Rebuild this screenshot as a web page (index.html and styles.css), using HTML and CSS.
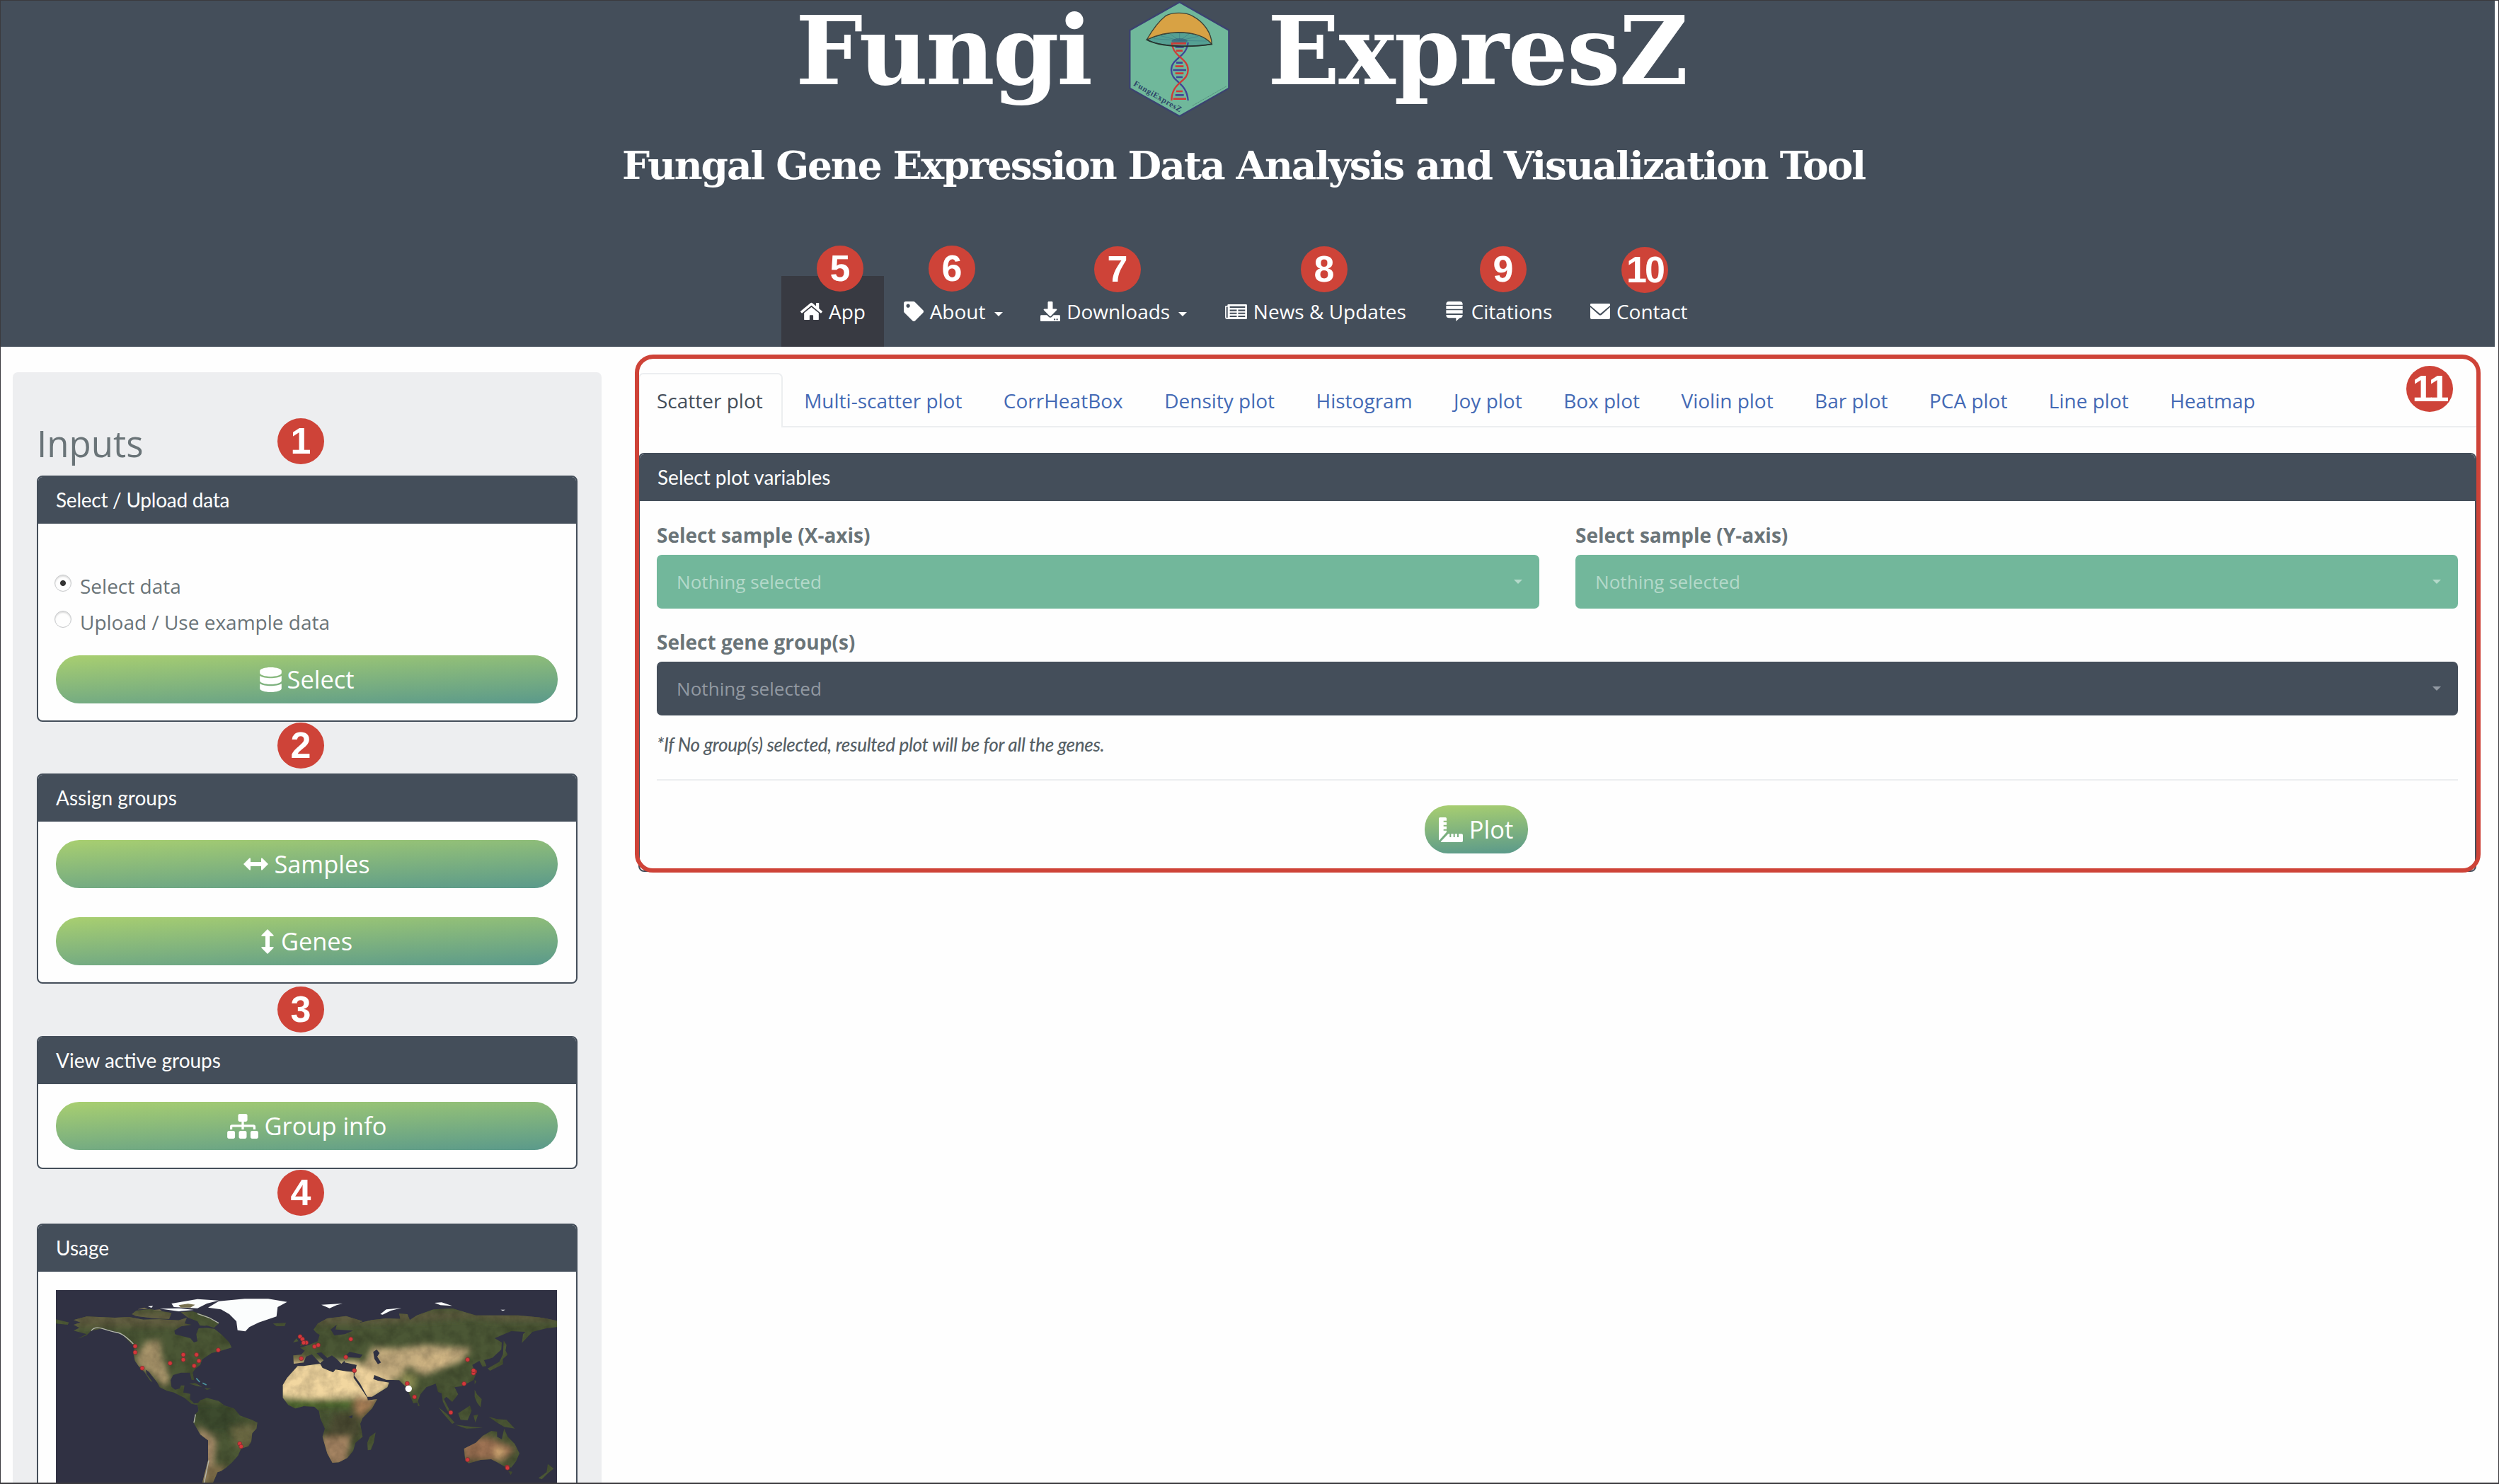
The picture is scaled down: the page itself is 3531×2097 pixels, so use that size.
FILE: index.html
```html
<!DOCTYPE html>
<html lang="en">
<head>
<meta charset="utf-8">
<title>FungiExpresZ</title>
<link rel="stylesheet" href="styles.css">
</head>
<body>
<header class="header">
  <div class="brand">
    <span class="brand-left">Fungi</span>
    <svg class="logo" viewBox="0 0 540 510">
      <path d="M260 9 469 128V374L260 493 49 374V128Z" fill="#70b89b" stroke="#3b4270" stroke-width="7"/>
      <path d="M121 168C180 200 320 200 397 187C370 150 310 138 255 138C200 138 150 155 121 168Z" fill="#55a093" stroke="#33473f" stroke-width="4"/>
      <path d="M260 172 150 164M260 172 180 152M260 172 220 144M260 172 260 140M260 172 300 144M260 172 340 154M260 172 375 174" stroke="#3f7f86" stroke-width="2"/>
      <ellipse cx="260" cy="174" rx="34" ry="12" fill="#345c7c" opacity=".6"/>
      <path d="M121 168C140 135 165 95 200 68C225 52 285 50 315 68C365 95 395 140 397 187C365 150 310 137 255 137C200 137 150 155 121 168Z" fill="#d8a244" stroke="#3c4237" stroke-width="4"/>
      <path d="M232 184h56M246 215h27M242 281h35M242 311h35M246 387h27M233 419h55" stroke="#cf3b36" stroke-width="8"/>
      <path d="M242 199h36M246 266h27M232 297h56M246 327h27M242 403h36" stroke="#3f4597" stroke-width="8"/>
      <path d="M296 180C290 245 225 245 225 297C225 350 290 345 296 426" fill="none" stroke="#3f4597" stroke-width="7"/>
      <path d="M227 180C233 245 296 245 296 297C296 350 227 345 226 426" fill="none" stroke="#cf3b36" stroke-width="7"/>
      <path d="M121 168C180 203 320 200 397 187" fill="none" stroke="#26332f" stroke-width="5"/>
      <text class="logo-text" transform="translate(63 361) rotate(30)" textLength="229">FungiExpresZ</text>
      <path d="M315 448 460 365" stroke="#57907f" stroke-width="3" stroke-dasharray="9 3"/>
    </svg>
    <span class="brand-right">ExpresZ</span>
  </div>
  <div class="subtitle">Fungal Gene Expression Data Analysis and Visualization Tool</div>
  <nav class="nav">
    <a class="nav-item active"><svg class="i-home" viewBox="0 0 576 512"><path d="M280.37 148.26L96 300.11V464a16 16 0 0 0 16 16l112.06-.29a16 16 0 0 0 15.92-16V368a16 16 0 0 1 16-16h64a16 16 0 0 1 16 16v95.64a16 16 0 0 0 16 16.05L464 480a16 16 0 0 0 16-16V300L295.67 148.26a12.19 12.19 0 0 0-15.3 0zM571.6 251.47L488 182.56V44.05a12 12 0 0 0-12-12h-56a12 12 0 0 0-12 12v72.61L318.47 43a48 48 0 0 0-61 0L4.34 251.47a12 12 0 0 0-1.6 16.9l25.5 31A12 12 0 0 0 45.15 301l235.22-193.74a12.19 12.19 0 0 1 15.3 0L530.9 301a12 12 0 0 0 16.9-1.6l25.5-31a12 12 0 0 0-1.7-16.93z"/></svg><span>App</span></a>
    <a class="nav-item"><svg class="i-28" viewBox="0 0 512 512"><path d="M0 252.118V48C0 21.49 21.49 0 48 0h204.118a48 48 0 0 1 33.941 14.059l211.882 211.882c18.745 18.745 18.745 49.137 0 67.882L293.823 497.941c-18.745 18.745-49.137 18.745-67.882 0L14.059 286.059A48 48 0 0 1 0 252.118zM112 64c-26.51 0-48 21.49-48 48s21.49 48 48 48 48-21.49 48-48-21.49-48-48-48z"/></svg><span>About</span><i class="caret"></i></a>
    <a class="nav-item"><svg class="i-28" viewBox="0 0 512 512"><path d="M216 0h80c13.3 0 24 10.7 24 24v168h87.7c17.8 0 26.7 21.5 14.1 34.1L269.7 378.3c-7.5 7.5-19.8 7.5-27.3 0L90.1 226.1c-12.6-12.6-3.7-34.1 14.1-34.1H192V24c0-13.3 10.7-24 24-24zm296 376v112c0 13.3-10.7 24-24 24H24c-13.3 0-24-10.7-24-24V376c0-13.3 10.7-24 24-24h146.7l49 49c20.1 20.1 52.5 20.1 72.6 0l49-49H488c13.3 0 24 10.7 24 24zm-124 88c0-11-9-20-20-20s-20 9-20 20 9 20 20 20 20-9 20-20zm64 0c0-11-9-20-20-20s-20 9-20 20 9 20 20 20 20-9 20-20z"/></svg><span>Downloads</span><i class="caret"></i></a>
    <a class="nav-item"><svg class="i-news" viewBox="0 0 94 64"><path fill-rule="evenodd" d="M14 0H90Q94 0 94 4V60Q94 64 90 64H9Q0 64 0 55V10Q0 6 4 6H10V4Q10 0 14 0ZM5 11V54Q5 59 9 59Q11 59 11 55V11ZM20 8V15H86V8ZM20 23V30H50V23ZM56 23V30H86V23ZM20 36V42H50V36ZM56 36V42H86V36ZM20 49V55H50V49ZM56 49V55H86V49Z"/></svg><span>News &amp; Updates</span></a>
    <a class="nav-item"><svg class="i-cite" viewBox="0 0 70 84"><path d="M12 0H58Q70 0 70 12V14H0V12Q0 0 12 0ZM0 18H70V32H0ZM0 37H70V51H0ZM0 57H70Q70 70 58 70L42 84V70H12Q0 70 0 57Z"/></svg><span>Citations</span></a>
    <a class="nav-item"><svg class="i-mail" viewBox="0 0 84 66"><path d="M4 0H80Q84 0 84 4V8L44 42Q42 44 40 42L0 8V4Q0 0 4 0ZM0 15 36 47Q42 52 48 47L84 15V60Q84 66 78 66H6Q0 66 0 60Z"/></svg><span>Contact</span></a>
  </nav>
</header>

<div class="content">
  <aside class="sidebar">
    <h2 class="inputs">Inputs</h2>
    <section class="card card-data">
      <div class="card-head">Select / Upload data</div>
      <div class="card-body">
        <label class="radio"><i class="dot on"></i>Select data</label>
        <label class="radio"><i class="dot"></i>Upload / Use example data</label>
        <button class="btn"><svg class="i-db" viewBox="0 0 448 512"><path d="M448 73.143v45.714C448 159.143 347.667 192 224 192S0 159.143 0 118.857V73.143C0 32.857 100.333 0 224 0s224 32.857 224 73.143zM448 176v102.857C448 319.143 347.667 352 224 352S0 319.143 0 278.857V176c48.125 33.143 136.208 48.572 224 48.572S399.874 209.143 448 176zm0 160v102.857C448 479.143 347.667 512 224 512S0 479.143 0 438.857V336c48.125 33.143 136.208 48.572 224 48.572S399.874 369.143 448 336z"/></svg>Select</button>
      </div>
    </section>
    <section class="card card-assign">
      <div class="card-head">Assign groups</div>
      <div class="card-body">
        <button class="btn"><svg class="i-h" viewBox="0 0 35 18"><path d="M0 9 8 1Q10-1 10 2V6H25V2Q25-1 27 1L35 9 27 17Q25 19 25 16V12H10V16Q10 19 8 17Z"/></svg>Samples</button>
        <button class="btn"><svg class="i-v" viewBox="0 0 18 35"><path d="M9 0 1 8Q-1 10 2 10H6V25H2Q-1 25 1 27L9 35 17 27Q19 25 16 25H12V10H16Q19 10 17 8Z"/></svg>Genes</button>
      </div>
    </section>
    <section class="card card-view">
      <div class="card-head">View active groups</div>
      <div class="card-body">
        <button class="btn"><svg class="i-site" viewBox="0 0 640 512"><path d="M128 352H32c-17.67 0-32 14.33-32 32v96c0 17.67 14.33 32 32 32h96c17.67 0 32-14.33 32-32v-96c0-17.67-14.33-32-32-32zm-24-80h192v48h48v-48h192v48h48v-57.59c0-21.17-17.23-38.41-38.41-38.41H344v-64h40c17.67 0 32-14.33 32-32V32c0-17.67-14.33-32-32-32H256c-17.67 0-32 14.33-32 32v96c0 17.67 14.33 32 32 32h40v64H94.41C73.23 224 56 241.23 56 262.41V320h48v-48zm264 80h-96c-17.67 0-32 14.33-32 32v96c0 17.67 14.33 32 32 32h96c17.67 0 32-14.33 32-32v-96c0-17.67-14.33-32-32-32zm240 0h-96c-17.67 0-32 14.33-32 32v96c0 17.67 14.33 32 32 32h96c17.67 0 32-14.33 32-32v-96c0-17.67-14.33-32-32-32z"/></svg>Group info</button>
      </div>
    </section>
    <section class="card card-usage">
      <div class="card-head">Usage</div>
      <div class="card-body">
        <svg class="map" viewBox="0 18 2124 819" preserveAspectRatio="none">
          <defs>
            <filter id="soft" x="-50%" y="-50%" width="200%" height="200%"><feGaussianBlur stdDeviation="12"/></filter>
            <filter id="grain" x="0" y="0" width="100%" height="100%"><feTurbulence type="fractalNoise" baseFrequency=".02" numOctaves="4" seed="4"/><feColorMatrix values="0 0 0 0 0  0 0 0 0 0  0 0 0 0 0  1.6 0 0 0 -.55"/></filter>
            <clipPath id="land">
              <path id="na" d="M75 145 130 130 250 135 310 132 370 143 440 142 520 146 555 135 545 160 575 165 530 172 502 190 505 205 535 213 570 222 585 240 600 235 595 205 605 180 640 178 672 182 700 205 720 225 735 240 745 262 700 275 660 285 620 312 612 335 590 352 580 368 586 400 575 398 568 368 530 368 497 378 486 400 490 428 505 440 525 435 530 422 545 422 540 452 570 458 568 480 585 498 605 497 600 505 575 500 545 475 500 452 470 445 440 430 430 410 395 365 380 355 385 375 410 408 400 403 375 365 350 340 335 318 328 285 335 255 318 245 280 205 240 190 190 182 150 190 130 210 90 225 130 205 75 190 100 178 75 165 105 155Z"/>
              <path d="M322 120 340 105 400 98 450 108 490 115 480 140 420 138 340 128ZM530 112 580 108 640 128 690 160 670 178 630 165 600 150 560 135ZM600 150 640 170 610 168ZM0 142 55 155 50 165 0 160ZM920 160 975 157 970 170 935 171ZM565 415 590 412 620 428 600 425ZM628 433 658 436 640 441Z"/>
              <path id="sa" d="M600 500 612 485 640 475 690 488 715 508 755 520 780 550 830 568 854 580 850 605 832 625 828 660 815 680 785 690 772 720 745 750 722 770 700 785 685 790 665 836H620L632 790 645 740 645 655 612 630 583 580 590 545 605 530Z"/>
              <path id="af" d="M1025 340 1050 340 1120 330 1130 348 1175 367 1185 355 1230 362 1262 365 1262 390 1290 430 1320 475 1322 485 1362 480 1340 520 1300 560 1290 585 1300 640 1270 665 1260 700 1235 730 1200 748 1172 750 1150 710 1130 640 1140 605 1120 560 1115 530 1095 512 1050 510 1015 520 985 505 962 475 962 420 980 390ZM1355 622 1347 665 1335 695 1322 697 1320 665 1330 640Z"/>
              <path id="eu" d="M1008 330 1006 295 1040 292 1055 275 1035 262 1075 250 1110 235 1118 208 1105 200 1092 185 1110 160 1150 138 1230 128 1300 150 1280 158 1340 145 1400 138 1460 140 1455 118 1490 120 1500 145 1530 125 1600 100 1680 95 1730 110 1780 125 1860 125 1960 125 2060 135 2124 148V175L2080 180 2020 195 1975 242 1980 205 1990 195 1930 192 1860 222 1890 240 1888 270 1850 305 1815 315 1825 340 1808 343 1795 318 1765 335 1780 375 1770 400 1720 425 1690 430 1705 460 1680 492 1655 470 1645 480 1665 520 1680 548 1660 530 1640 490 1635 455 1620 450 1610 415 1570 430 1545 460 1532 495 1515 498 1485 430 1455 400 1400 398 1350 378 1345 395 1365 402 1412 410 1405 430 1340 470 1320 470 1290 415 1265 380 1275 335 1225 325 1220 305 1235 305 1210 330 1190 310 1170 295 1150 305 1125 282 1105 285 1135 315 1120 328 1085 290 1060 300 1050 325Z"/>
              <path d="M1005 240 1020 222 1028 235ZM1035 215 1050 225 1070 245 1035 255 1045 235ZM1898 232 1910 250 1906 275 1915 292 1895 310 1895 332 1840 360 1830 350 1880 322 1895 290ZM1775 398 1782 405 1775 418ZM1775 440 1785 460 1805 480 1800 515 1785 495 1775 470ZM1622 515 1660 545 1690 580 1680 585 1645 545ZM1690 588 1740 595 1810 602 1740 605ZM1705 540 1755 508 1762 530 1745 570 1715 568ZM1770 550 1790 545 1778 580ZM1835 555 1870 565 1910 568 1945 605 1900 598 1870 580ZM1530 480 1542 508 1535 510Z"/>
              <path id="au" d="M1730 690 1780 665 1810 635 1845 615 1870 618 1870 640 1890 650 1900 605 1915 640 1945 670 1965 710 1950 745 1930 770 1905 768 1870 748 1845 735 1800 738 1750 752 1735 740ZM1918 785 1935 788 1928 802ZM2085 755 2110 775 2085 795 2060 820 2045 815 2080 790Z"/>
            </clipPath>
          </defs>
          <rect y="18" width="2124" height="820" fill="#303143"/>
          <g clip-path="url(#land)">
            <rect y="18" width="2124" height="820" fill="#4b5735"/>
            <g filter="url(#soft)">
              <path d="M60 110H560V175H60ZM1080 110H2124V150H1900L1750 135 1400 160 1100 165Z" fill="#615d40"/>
              <path d="M385 235 440 230 450 300 485 400 460 430 410 380 340 330 345 290Z" fill="#a8946b"/>
              <path d="M560 500 720 500 790 560 740 620 640 620 590 560Z" fill="#3c4c2f"/>
              <path d="M600 600 680 650 670 760 640 836H610Z" fill="#a58a68"/>
              <path d="M740 600 860 580 830 690 760 680Z" fill="#6b6842"/>
              <path d="M640 760H720V840H630Z" fill="#7a6a47"/>
              <path d="M940 470V320H1290L1320 475 1240 475 1100 480Z" fill="#f2d7a0"/>
              <path d="M1255 320 1340 340 1440 410 1330 485 1275 410Z" fill="#efd39d"/>
              <path d="M1270 470 1370 480 1300 560 1260 520Z" fill="#a87f57"/>
              <path d="M950 480H1270L1250 515H1000Z" fill="#4f6c2e"/>
              <path d="M1120 640 1250 640 1230 760H1150Z" fill="#a58462"/>
              <path d="M1180 540H1290V640H1140Z" fill="#4c4c30"/>
              <path d="M1340 260 1450 265 1560 250 1760 265 1720 320 1650 345 1560 380 1490 340 1460 395 1400 395 1300 345Z" fill="#c2aa7d"/>
              <path d="M1520 310 1680 290 1640 340 1540 330Z" fill="#dcbf8b"/>
              <path d="M1460 370H1530L1520 440 1470 420Z" fill="#8f9055"/>
              <path d="M1000 290H1060V330H1000Z" fill="#7b7048"/>
              <path d="M1720 650 1830 640 1950 690 1900 740 1730 740Z" fill="#9d7252"/>
              <ellipse cx="1880" cy="708" rx="20" ry="24" fill="#e0b57c"/>
            </g>
            <rect y="18" width="2124" height="820" filter="url(#grain)" opacity=".22"/>
          </g>
          <path d="M1345 280 1360 270 1372 285 1362 300 1378 325 1365 332 1350 310ZM1225 298 1245 280 1300 292 1290 305 1245 303ZM1240 555 1258 548 1255 562ZM1165 185 1190 165 1185 185 1260 190 1225 205 1180 210Z" fill="#303143"/>
          <path d="M645 92 690 65 800 55 900 55 980 68 940 90 935 130 860 155 820 175 803 193 770 188 765 150 735 120 700 100ZM490 75 600 56 690 62 640 75 600 95 500 90ZM440 97 520 95 585 102 520 108ZM390 87 412 85 405 93ZM1125 80 1215 75 1190 82 1160 95ZM1375 120 1400 100 1465 94 1420 105 1385 122ZM1605 72 1635 70 1680 85 1630 82ZM1885 101 1905 101 1895 106Z" fill="#fbfdfd"/>
          <path d="M520 82 560 76 590 80 570 92 530 92ZM345 100 375 92 390 98ZM410 103 440 100 450 106Z" fill="#77704f"/>
          <path d="M150 190Q165 170 200 182T260 198 328 246M600 118 650 135 690 158M592 545 585 580M648 740 628 836" fill="none" stroke="#b4b7ac" stroke-width="4"/>
          <path d="M595 392 610 408M622 412 638 420" stroke="#4d98a3" stroke-width="5"/>
          <g class="pins">
            <circle cx="336" cy="256" r="9"/><circle cx="336" cy="282" r="9"/><circle cx="366" cy="349" r="9"/><circle cx="484" cy="328" r="9"/><circle cx="540" cy="292" r="9"/><circle cx="540" cy="313" r="9"/><circle cx="596" cy="292" r="9"/><circle cx="606" cy="318" r="9"/><circle cx="586" cy="339" r="9"/><circle cx="688" cy="272" r="9"/><circle cx="779" cy="669" r="9"/><circle cx="785" cy="681" r="9"/><circle cx="1035" cy="215" r="9"/><circle cx="1045" cy="226" r="9"/><circle cx="1061" cy="241" r="9"/><circle cx="1050" cy="241" r="9"/><circle cx="1040" cy="308" r="9"/><circle cx="1096" cy="257" r="9"/><circle cx="1112" cy="251" r="9"/><circle cx="1250" cy="226" r="9"/><circle cx="1229" cy="302" r="9"/><circle cx="1265" cy="359" r="9"/><circle cx="1745" cy="313" r="9"/><circle cx="1775" cy="363" r="9"/><circle cx="1770" cy="370" r="9"/><circle cx="1770" cy="359" r="9"/><circle cx="1730" cy="415" r="9"/><circle cx="1489" cy="414" r="9"/><circle cx="1520" cy="471" r="9"/><circle cx="1674" cy="537" r="9"/><circle cx="1745" cy="737" r="9"/><circle cx="1913" cy="768" r="9"/><circle cx="1914" cy="772" r="9"/>
          </g>
          <circle cx="1495" cy="436" r="14" fill="#fff"/>
        </svg>
      </div>
    </section>
  </aside>

  <main class="main">
    <div class="tabs">
      <a class="tab on">Scatter plot</a><a class="tab">Multi-scatter plot</a><a class="tab">CorrHeatBox</a><a class="tab">Density plot</a><a class="tab">Histogram</a><a class="tab">Joy plot</a><a class="tab">Box plot</a><a class="tab">Violin plot</a><a class="tab">Bar plot</a><a class="tab">PCA plot</a><a class="tab">Line plot</a><a class="tab">Heatmap</a>
    </div>
    <section class="card card-plot">
      <div class="card-head">Select plot variables</div>
      <div class="card-body">
        <div class="fields">
          <div class="field"><label class="lbl">Select sample (X-axis)</label><div class="select">Nothing selected<i class="caret"></i></div></div>
          <div class="field"><label class="lbl">Select sample (Y-axis)</label><div class="select">Nothing selected<i class="caret"></i></div></div>
        </div>
        <div class="field"><label class="lbl">Select gene group(s)</label><div class="select dark">Nothing selected<i class="caret"></i></div></div>
        <p class="note">*If No group(s) selected, resulted plot will be for all the genes.</p>
        <hr class="rule">
        <div class="actions"><button class="btn btn-plot"><svg class="i-ruler" viewBox="0 0 102 105"><path d="M5 0H28Q33 0 33 5V14H20V20H33V32H20V38H33V50H20V56H33V62L3 96Q0 99 0 94V5Q0 0 5 0ZM9 102 40 70H46V84H52V70H62V84H68V70H78V84H84V70H97Q102 70 102 75V100Q102 105 97 105H12Q6 105 9 102Z"/></svg>Plot</button></div>
      </div>
    </section>
  </main>
</div>

<div class="outline"></div>
<b class="badge b1">1</b><b class="badge b2">2</b><b class="badge b3">3</b><b class="badge b4">4</b><b class="badge b5">5</b><b class="badge b6">6</b><b class="badge b7">7</b><b class="badge b8">8</b><b class="badge b9">9</b><b class="badge b10">10</b><b class="badge b11">11</b>
<div class="frame"></div>
</body>
</html>
```
FILE: styles.css
```css
* { box-sizing: border-box; }
body {
  margin: 0;
  position: relative;
  width: 3531px;
  height: 2097px;
  overflow: hidden;
  background: #fefefe;
  color: #6a7478;
  font-family: "Open Sans", "Noto Sans", sans-serif;
  font-size: 28px;
}
svg { display: block; flex: none; fill: currentColor; }

.frame {
  position: absolute;
  inset: 0;
  border: 1px solid #3b3a3e;
  border-bottom-width: 2px;
}

/* Header */
.header { width: 3525px; height: 490px; background: #444e5a; color: #fff; }
.brand {
  display: flex;
  height: 144px;
  padding-left: 1124px;
  font: bold 134px/144px "DejaVu Serif", serif;
  letter-spacing: -3px;
}
.brand-left { width: 456px; }
.logo { width: 180px; height: 170px; }
.logo-text { font: bold 34px "Liberation Serif", serif; fill: #2c4468; letter-spacing: 0; }
.brand-right { margin-left: 31px; letter-spacing: -1.7px; }
.subtitle {
  height: 180px;
  padding-left: 879px;
  font: bold 55px/180px "DejaVu Serif", serif;
  letter-spacing: -2.15px;
  white-space: nowrap;
}
.nav { display: flex; height: 100px; margin-top: 66px; padding-left: 1104px; gap: .7px; }
.nav-item { display: flex; align-items: center; padding: 0 26px 0 27px; line-height: 101px; white-space: nowrap; }
.nav-item.active { background: #383a42; }
.nav-item span { margin-left: 9px; }
.i-home { width: 31px; height: 28px; }
.i-28 { width: 28px; height: 28px; }
.i-news { width: 31px; height: 21px; }
.i-cite { width: 24px; height: 28px; margin-left: 2px; margin-right: 3px; }
.i-mail { width: 28px; height: 22px; }
.caret {
  width: 12px;
  border: 6px solid transparent;
  border-top-color: currentColor;
  border-bottom: 0;
  margin: 8px 0 0 12px;
}

/* Layout */
.content { display: flex; height: 1607px; }
.sidebar {
  width: 832px;
  margin: 36px 52px 0 18px;
  padding: 54px 34px 0;
  background: #edeef0;
  border-radius: 7px 7px 0 0;
}
.inputs { margin: 0; font-size: 51px; font-weight: 400; line-height: 92px; }
.card { background: #fefefe; border: 2px solid #444e5a; border-radius: 8px; overflow: hidden; }
.card-head {
  height: 66px;
  padding-left: 25px;
  background: #444e5a;
  color: #fff;
  font: 28px/65px "Lato", sans-serif;
}
.sidebar .card-body { padding: 0 25px; display: flex; flex-direction: column; }
.card-data { height: 348px; margin-bottom: 73px; }
.card-data .card-head { letter-spacing: -.25px; }
.card-data .card-body { padding-top: 62px; }
.radio { display: flex; align-items: center; height: 51px; }
.dot {
  width: 24px;
  height: 24px;
  margin: -7px 12px 0 -2px;
  border: 1.5px solid #c4c6c8;
  border-radius: 50%;
  box-shadow: inset 0 2px 2px #ddd;
}
.dot.on { background: radial-gradient(circle, #333 0 3.5px, transparent 4.5px); }
.btn {
  display: flex;
  align-items: center;
  justify-content: center;
  width: 709px;
  height: 68px;
  margin: 0;
  padding: 0;
  border: 0;
  border-radius: 33px;
  background: linear-gradient(177deg, #a9cf70, #5a998b);
  color: #fff;
  font: 34.4px/68px "Open Sans", sans-serif;
  gap: 8px;
}
.card-data .btn { margin-top: 22px; }
.i-db { width: 31px; height: 35px; }
.card-assign { height: 297px; margin-bottom: 74px; }
.card-assign .card-body { padding-top: 26px; gap: 41px; }
.i-h { width: 35px; height: 18px; }
.i-v { width: 18px; height: 35px; margin-right: 2px; }
.card-view { height: 188px; margin-bottom: 77px; }
.card-view .card-body { padding-top: 25px; }
.i-site { width: 44px; height: 35px; margin-right: 1px; }
.card-usage { height: 368px; border-bottom: 0; border-radius: 8px 8px 0 0; }
.card-usage .card-body { padding-top: 26px; }
.map { width: 708px; height: 273px; }
.pins circle { fill: #d4373b; stroke: #6d2a2c; stroke-width: 2; }

/* Plot area */
.main { width: 2597px; padding-top: 37px; }
.tabs { display: flex; gap: 2.45px; height: 77px; margin-bottom: 36px; border-bottom: 2px solid #eceef0; }
.tab {
  height: 77px;
  padding: 0 26px;
  border: 2px solid transparent;
  border-bottom: 0;
  color: #446ab5;
  line-height: 74px;
  white-space: nowrap;
}
.tab.on { padding-left: 24px; background: #fefefe; border-color: #eceef0; border-radius: 7px 7px 0 0; color: #444e5a; }
.card-plot { height: 592px; }
.card-plot .card-body { padding: 17px 24px 0; }
.fields { display: flex; gap: 51px; }
.fields .field { flex: 1; }
.field { height: 151px; }
.lbl { display: block; height: 59px; padding-top: 6px; font-size: 28px; font-weight: 700; line-height: 50px; }
.select {
  display: flex;
  align-items: center;
  justify-content: space-between;
  height: 76px;
  padding: 0 24px 0 28px;
  border-radius: 7px;
  background: #72b79b;
  color: #b4d9ca;
  font-size: 26.1px;
}
.select .caret { margin: 0; }
.select.dark { background: #444e5a; color: #9299a2; }
.note {
  margin: 0;
  height: 74px;
  font: italic 500 26px/50px "Lato", sans-serif;
  letter-spacing: -.31px;
  color: #566066;
}
.rule { margin: 0; border: 0; border-top: 2px solid #eceef0; }
.actions { display: flex; justify-content: center; padding: 35px 230px 0 0; }
.btn-plot { width: 146px; gap: 9px; }
.i-ruler { width: 34px; height: 35px; }

/* Annotations */
.outline { position: absolute; left: 897px; top: 501px; width: 2608px; height: 732px; border: 6px solid #ce4338; border-radius: 26px; }
.badge {
  position: absolute;
  width: 66px;
  height: 65px;
  border-radius: 50%;
  background: #ce4338;
  color: #fff;
  font: bold 52px/64px "Liberation Sans", sans-serif;
  text-align: center;
}
.b1 { left: 392px; top: 591px; }
.b2 { left: 392px; top: 1021px; }
.b3 { left: 392px; top: 1394px; }
.b4 { left: 392px; top: 1653px; }
.b5 { left: 1154px; top: 347px; }
.b6 { left: 1312px; top: 347px; }
.b7 { left: 1546px; top: 348px; }
.b8 { left: 1838px; top: 348px; }
.b9 { left: 2091px; top: 348px; }
.b10 { left: 2291px; top: 349px; letter-spacing: -3px; }
.b11 { left: 3400px; top: 517px; letter-spacing: -3px; }
```
